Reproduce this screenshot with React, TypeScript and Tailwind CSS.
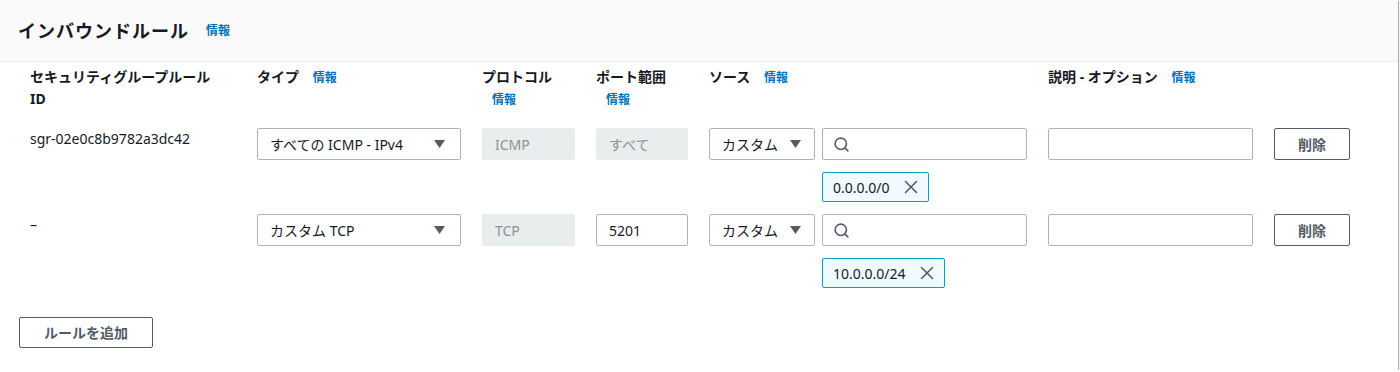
import { Search, X } from 'lucide-react'

type Rule = {
  id: string
  type: string
  protocol: string
  port: string
  portEditable: boolean
  cidr: string
}

const rules: Rule[] = [
  { id: 'sgr-02e0c8b9782a3dc42', type: 'すべての ICMP - IPv4', protocol: 'ICMP', port: 'すべて', portEditable: false, cidr: '0.0.0.0/0' },
  { id: '–', type: 'カスタム TCP', protocol: 'TCP', port: '5201', portEditable: true, cidr: '10.0.0.0/24' },
]

const Info = () => (
  <span className="inline-block ml-[10px] text-[12px] font-bold text-[#0073bb] leading-[22px]">情報</span>
)

const Caret = () => (
  <svg width="11" height="8" viewBox="0 0 11 8" className="shrink-0">
    <polygon points="0,0 11,0 5.5,8" fill="#545b64" />
  </svg>
)

function Label({ text }: { text: string }) {
  return (
    <div className="text-[14px] font-bold text-[#16191f] leading-[22px]">
      {text} <Info />
    </div>
  )
}

export default function App() {
  return (
    <div className="w-[1398px] h-[370px] bg-white shadow-[1px_1px_1px_0_rgba(0,28,36,0.3),0_1px_1px_0_rgba(0,28,36,0.3)] font-['Noto_Sans','Noto_Sans_CJK_JP',sans-serif] text-[#16191f]">
      <div className="h-[62px] bg-[#fafafa] border-b border-[#eaeded] px-[18px] flex items-center">
        <h2 className="text-[18px] font-bold leading-[24px] tracking-[1px]">インバウンドルール</h2>
        <span className="ml-[17px] text-[12px] font-bold text-[#0073bb]">情報</span>
      </div>

      <div className="px-[19px] pt-[4px]">
        <div className="pl-[11px] grid grid-cols-[206px_204px_93px_92px_318px_205px_76px] gap-x-[21px] items-start">
          <div className="w-[195px] text-[14px] font-bold leading-[22px]">セキュリティグループルール ID</div>
          <Label text="タイプ" />
          <Label text="プロトコル" />
          <Label text="ポート範囲" />
          <Label text="ソース" />
          <Label text="説明 - オプション" />
          <div />

          {rules.map((r, i) => (
            <div key={r.id} className="contents">
              <div className={`${i === 0 ? 'mt-[17px]' : 'mt-[12px]'} text-[14px] leading-[22px]`}>{r.id}</div>
              <div className={`${i === 0 ? 'mt-[17px]' : 'mt-[12px]'} h-[32px] border border-[#aab7b8] rounded-[2px] pl-[12px] pr-[15px] flex items-center justify-between text-[14px]`}>
                <span>{r.type}</span>
                <Caret />
              </div>
              <div className={`${i === 0 ? 'mt-[17px]' : 'mt-[12px]'} h-[32px] bg-[#eaeded] border border-[#eaeded] rounded-[2px] pl-[12px] flex items-center text-[14px] text-[#879596]`}>
                {r.protocol}
              </div>
              {r.portEditable ? (
                <div className={`${i === 0 ? 'mt-[17px]' : 'mt-[12px]'} h-[32px] border border-[#aab7b8] rounded-[2px] pl-[12px] flex items-center text-[14px]`}>
                  {r.port}
                </div>
              ) : (
                <div className={`${i === 0 ? 'mt-[17px]' : 'mt-[12px]'} h-[32px] bg-[#eaeded] border border-[#eaeded] rounded-[2px] pl-[12px] flex items-center text-[14px] text-[#879596]`}>
                  {r.port}
                </div>
              )}
              <div className={`${i === 0 ? 'mt-[17px]' : 'mt-[12px]'} flex flex-col`}>
                <div className="flex gap-[7px]">
                  <div className="w-[106px] h-[32px] border border-[#aab7b8] rounded-[2px] pl-[12px] pr-[13px] flex items-center justify-between text-[14px]">
                    <span>カスタム</span>
                    <Caret />
                  </div>
                  <div className="w-[205px] h-[32px] border border-[#aab7b8] rounded-[2px] pl-[10px] flex items-center">
                    <Search size={17} strokeWidth={2.3} color="#545b64" />
                  </div>
                </div>
                <div className="ml-[113px] mt-[12px] self-start h-[30px] bg-[#f1faff] border border-[#00a1c9] rounded-[2px] pl-[10px] pr-[6px] flex items-center gap-[10px] text-[14px]">
                  <span>{r.cidr}</span>
                  <X size={22} strokeWidth={1.7} color="#545b64" />
                </div>
              </div>
              <div className={`${i === 0 ? 'mt-[17px]' : 'mt-[12px]'} h-[32px] border border-[#aab7b8] rounded-[2px]`} />
              <button className={`${i === 0 ? 'mt-[17px]' : 'mt-[12px]'} h-[32px] border border-[#545b64] rounded-[2px] bg-white text-[14px] font-bold text-[#545b64]`}>
                削除
              </button>
            </div>
          ))}
        </div>

        <button className="mt-[29px] h-[31px] px-[24px] border border-[#545b64] rounded-[2px] bg-white text-[14px] font-bold text-[#545b64] leading-none">
          ルールを追加
        </button>
      </div>
    </div>
  )
}
